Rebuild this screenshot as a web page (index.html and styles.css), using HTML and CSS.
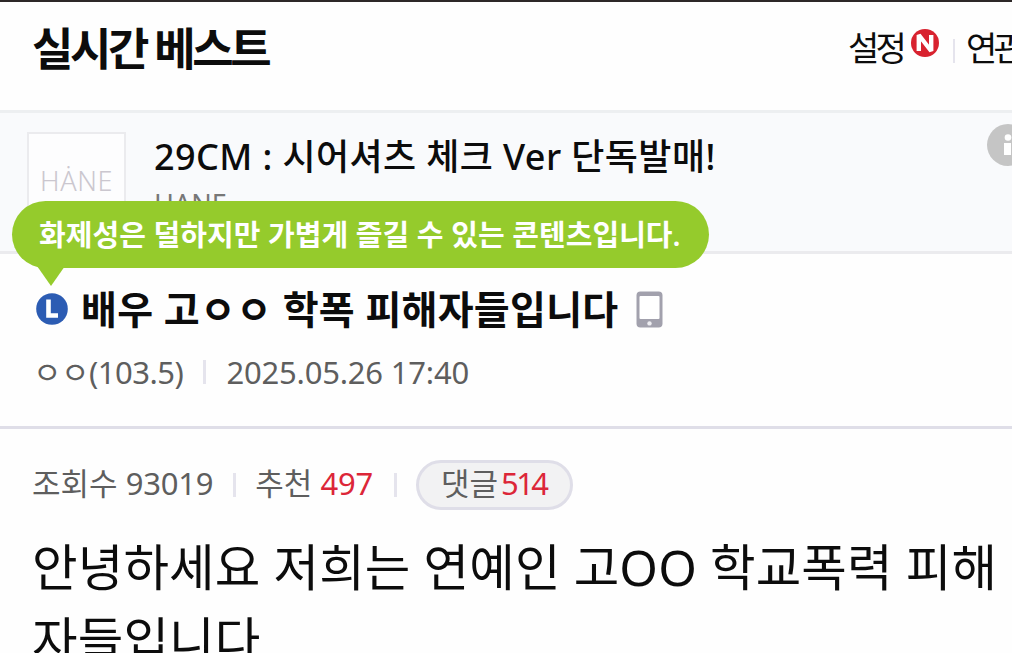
FILE: index.html
```
<!DOCTYPE html>
<html lang="ko">
<head>
    <meta charset="UTF-8" />
    <meta name="viewport" content="width=device-width, initial-scale=1.0" />
    <title>실시간 베스트</title>
    <link rel="stylesheet" href="styles.css">
</head>
<body>
    <div class="top-strip"></div>

    <header class="gallery-header">
        <h1 class="gallery-title">실시간 베스트</h1>
        <nav class="gallery-nav">
            <a class="nav-link">설정</a>
            <svg class="new-icon" width="28" height="28" viewBox="0 0 28 28" aria-hidden="true">
                <circle cx="14" cy="14" r="14" fill="#d8222f" />
                <path d="M7.8 22V6L20.2 22V6" fill="none" stroke="#fff" stroke-width="4.4" stroke-linejoin="bevel" />
            </svg>
            <span class="divider nav-divider"></span>
            <a class="nav-link">연관</a>
        </nav>
    </header>

    <section class="ad">
        <div class="ad-thumb">HȦNE</div>
        <div class="ad-text">
            <div class="ad-title">29CM : 시어셔츠 체크 Ver 단독발매!</div>
            <div class="ad-brand">HANE</div>
        </div>
        <svg class="info-icon" width="42" height="42" viewBox="0 0 42 42" aria-hidden="true">
            <circle cx="21" cy="21" r="21" fill="#c5c5c5" />
            <circle cx="21" cy="13.5" r="3.3" fill="#fff" />
            <path d="M17 19h7v12h-7z" fill="#fff" />
        </svg>
    </section>

    <section class="post-head">
        <div class="tooltip">화제성은 덜하지만 가볍게 즐길 수 있는 콘텐츠입니다.</div>
        <div class="post-title-row">
            <svg class="light-icon" width="32" height="32" viewBox="0 0 32 32" aria-hidden="true">
                <circle cx="16" cy="16" r="15.8" fill="#2c5cb3" />
                <path d="M12.5 6.5v16h9.5" fill="none" stroke="#fff" stroke-width="4.6" />
            </svg>
            <h2 class="post-title">배우 고ㅇㅇ 학폭 피해자들입니다</h2>
            <svg class="phone-icon" width="27" height="37" viewBox="0 0 27 37" aria-hidden="true">
                <rect x="0.5" y="0.5" width="26" height="36" rx="4" fill="#a2a1ad" />
                <rect x="3.5" y="5" width="20" height="23" rx="1" fill="#fff" />
                <circle cx="13.5" cy="32.4" r="2.2" fill="#eeeef2" />
            </svg>
        </div>
        <div class="post-meta">
            <span class="writer">ㅇㅇ<span class="ip">(103.5)</span></span>
            <span class="divider"></span>
            <span class="date">2025.05.26 17:40</span>
        </div>
    </section>

    <main class="post">
        <div class="post-stats">
            <span class="stat">조회수 <span class="num">93019</span></span>
            <span class="divider views-divider"></span>
            <span class="stat">추천 <em class="num">497</em></span>
            <span class="divider likes-divider"></span>
            <a class="comment-button">댓글<em class="num">514</em></a>
        </div>
        <p class="post-body">안녕하세요 저희는 연예인 고OO 학교폭력 피해자들입니다</p>
    </main>
</body>
</html>
```

FILE: styles.css
```
:root {
    --text-color: #0c0c0c;
    --text-muted: #5e5e5e;
    --line-color: #dfdee8;
    --red: #dc2638;
    --green: #95cb2c;
}

* {
    box-sizing: border-box;
}

body {
    margin: 0;
    height: 653px;
    overflow: hidden;
    background: #fefefe;
    color: var(--text-color);
    font-family: "Noto Sans", "Noto Sans CJK KR", sans-serif;
}

h1,
h2,
p {
    margin: 0;
}

em {
    font-style: normal;
    color: var(--red);
}

svg {
    display: block;
    flex: none;
}

.top-strip {
    height: 2px;
    background: #2d2828;
}

.divider {
    flex: none;
    width: 3px;
    height: 24px;
    background: #e5e4ed;
}

/* header */
.gallery-header {
    display: flex;
    height: 108px;
    padding-left: 32px;
}

.gallery-title {
    width: 816px;
    flex: none;
    padding-top: 13px;
    font-size: 45px;
    line-height: 67px;
    font-weight: 700;
    letter-spacing: -3.4px;
    white-space: nowrap;
}

.gallery-nav {
    display: flex;
    flex: none;
    padding-top: 21px;
}

.nav-link {
    font-size: 34px;
    line-height: 50px;
    letter-spacing: -3.8px;
    white-space: nowrap;
}

.new-icon {
    margin: 6px 14px 0 8px;
}

.nav-divider {
    width: 2px;
    margin: 16px 11px 0 0;
}

/* ad */
.ad {
    display: flex;
    height: 144px;
    padding-left: 27px;
    border-top: 3px solid #edeff1;
    border-bottom: 3px solid #ebebee;
    background: #f9fafc;
}

.ad-thumb {
    flex: none;
    width: 99px;
    height: 99px;
    margin: 19px 28px 0 0;
    border: 2px solid #ebebee;
    background: #fdfdfe;
    color: #cbc7cf;
    font-size: 27px;
    font-weight: 300;
    letter-spacing: 0.6px;
    line-height: 94px;
    text-align: center;
}

.ad-text {
    flex: none;
    width: 833px;
    padding-top: 17px;
}

.ad-title {
    font-size: 36px;
    line-height: 54px;
    font-weight: 500;
    letter-spacing: 0.4px;
    white-space: nowrap;
}

.ad-brand {
    padding-top: 3px;
    font-size: 27px;
    line-height: 34px;
    color: #777;
}

.info-icon {
    margin-top: 11px;
}

/* post head */
.post-head {
    position: relative;
    height: 175px;
    padding: 28px 0 0 36px;
    border-bottom: 3px solid var(--line-color);
}

.tooltip {
    position: absolute;
    left: 12px;
    top: -53px;
    width: 697px;
    height: 67px;
    padding-left: 27px;
    border-radius: 34px;
    background: var(--green);
    color: #fff;
    font-size: 29px;
    line-height: 67px;
    font-weight: 600;
    letter-spacing: 0.05px;
    white-space: nowrap;
}

.tooltip::after {
    content: "";
    position: absolute;
    left: 25px;
    top: 65px;
    border: solid transparent;
    border-width: 20px 14px 0;
    border-top-color: var(--green);
}

.post-title-row {
    display: flex;
    align-items: center;
    height: 54px;
}

.post-title {
    margin: 0 17px 0 13px;
    font-size: 39px;
    line-height: 54px;
    font-weight: 700;
    letter-spacing: 0.28px;
    white-space: nowrap;
}

.post-meta {
    display: flex;
    align-items: center;
    margin-top: 13px;
    color: var(--text-muted);
    font-size: 31px;
    line-height: 46px;
}

.writer {
    margin-left: -3px;
    letter-spacing: -0.5px;
}

.date {
    letter-spacing: -0.2px;
}

.post-meta .divider {
    margin: 0 20px;
}

/* post */
.post {
    padding: 30px 0 0 32px;
}

.post-stats {
    display: flex;
    align-items: center;
    height: 51px;
    color: var(--text-muted);
    font-size: 31px;
    line-height: 46px;
    white-space: nowrap;
}

.stat {
    margin-top: -3px;
}

.stat .num {
    letter-spacing: -0.2px;
}

.views-divider {
    margin: 0 19px 0 20px;
}

.likes-divider {
    margin: 0 19px 0 21px;
}

.comment-button {
    width: 157px;
    height: 50px;
    padding-left: 22px;
    border: 3px solid var(--line-color);
    border-radius: 25px;
    background: #f2f2f3;
    line-height: 41px;
}

.comment-button .num {
    margin-left: 3px;
    letter-spacing: -2.6px;
}

.post-body {
    width: 978px;
    margin-top: 21px;
    font-size: 49.5px;
    line-height: 73px;
    letter-spacing: 0.15px;
    word-break: break-all;
}
```
